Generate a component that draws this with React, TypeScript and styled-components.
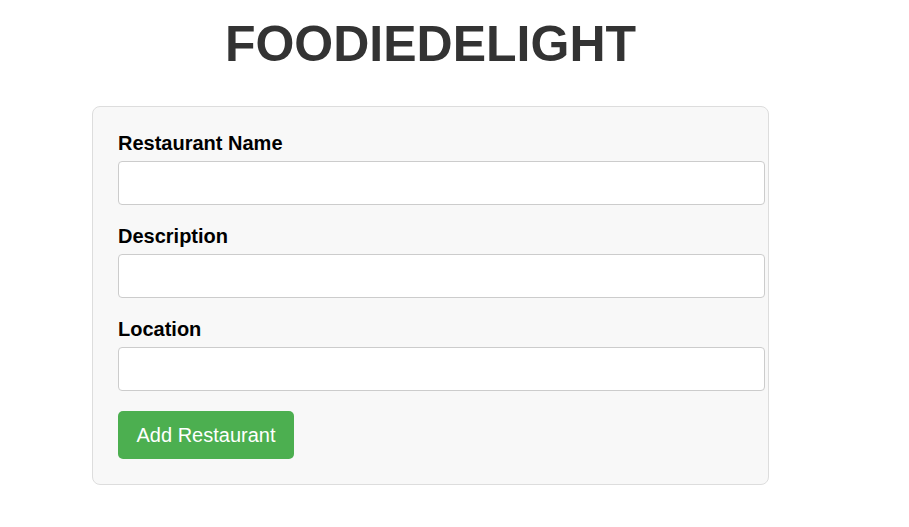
import React from "react";
import styled, { createGlobalStyle } from "styled-components";

const GlobalStyle = createGlobalStyle`
  html, body {
    margin: 0;
    padding: 0;
    background: #ffffff;
    font-family: "Liberation Sans", Arial, Helvetica, sans-serif;
  }
`;

const Page = styled.div`
  width: 861px;
  display: flex;
  flex-direction: column;
  align-items: center;
`;

const Title = styled.h1`
  margin: 15px 0 33px;
  font-size: 50px;
  line-height: 58px;
  font-weight: 700;
  color: #333333;
  text-align: center;
`;

const Form = styled.form`
  width: 625px;
  padding: 25px;
  background: #f8f8f8;
  border: 1px solid #dddddd;
  border-radius: 8px;
`;

const Field = styled.div`
  display: flex;
  flex-direction: column;
  margin-bottom: 20px;
`;

const Label = styled.label`
  display: block;
  font-size: 20px;
  line-height: 23px;
  font-weight: 700;
  color: #000000;
  margin-bottom: 6px;
`;

const Input = styled.input`
  box-sizing: content-box;
  width: 100%;
  height: 22px;
  padding: 10px;
  border: 1px solid #cccccc;
  border-radius: 4px;
  background: #ffffff;
  font-family: "Liberation Sans", Arial, sans-serif;
  font-size: 16px;
  outline: none;
`;

const Button = styled.button`
  height: 48px;
  padding: 0 18.5px;
  background: #4caf50;
  color: #ffffff;
  border: none;
  border-radius: 5px;
  font-family: "Liberation Sans", Arial, sans-serif;
  font-size: 20px;
  cursor: pointer;
`;

const fields = [
  { id: "name", label: "Restaurant Name" },
  { id: "description", label: "Description" },
  { id: "location", label: "Location" },
];

export default function App() {
  return (
    <>
      <GlobalStyle />
      <Page>
        <Title>FOODIEDELIGHT</Title>
        <Form onSubmit={(e) => e.preventDefault()}>
          {fields.map((f) => (
            <Field key={f.id}>
              <Label htmlFor={f.id}>{f.label}</Label>
              <Input id={f.id} type="text" />
            </Field>
          ))}
          <Button type="submit">Add Restaurant</Button>
        </Form>
      </Page>
    </>
  );
}
